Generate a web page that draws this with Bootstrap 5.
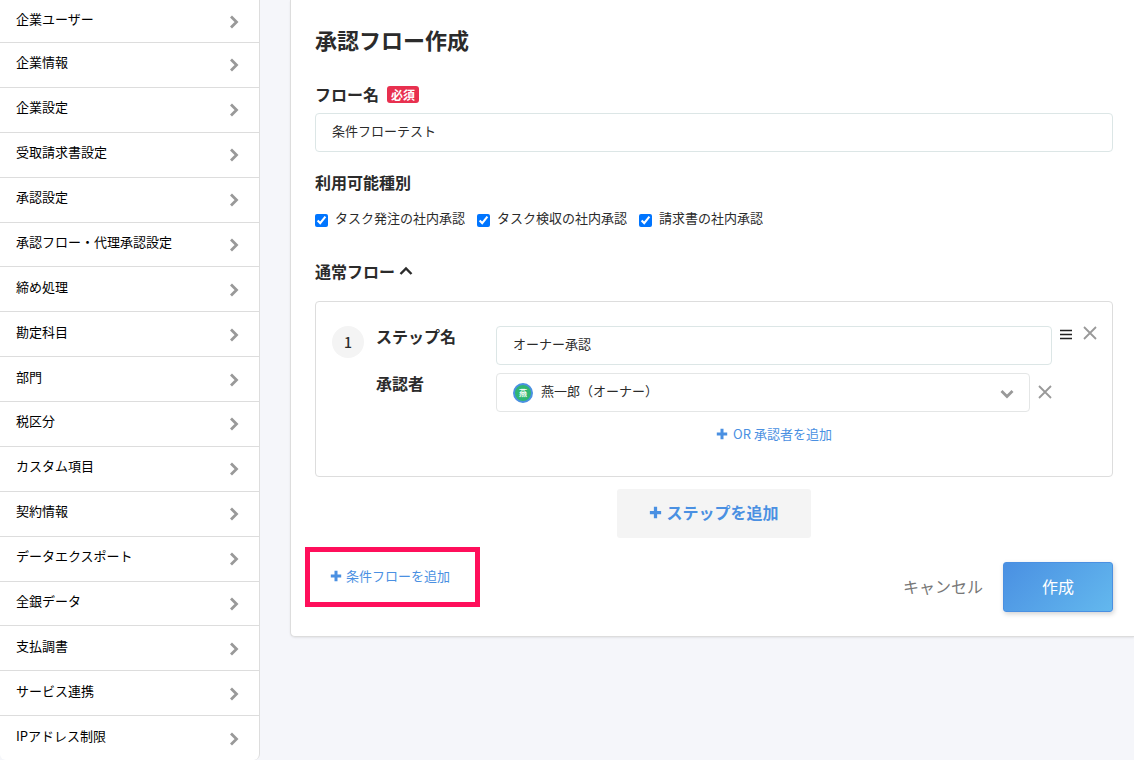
<!DOCTYPE html>
<html lang="ja">
<head>
<meta charset="utf-8">
<meta name="viewport" content="width=device-width, initial-scale=1">
<title>承認フロー作成</title>
<link href="https://cdn.jsdelivr.net/npm/bootstrap@5.3.0/dist/css/bootstrap.min.css" rel="stylesheet">
<style>
  body { background: #f5f6fa; color: #2b2b2b; font: 13px/20px "Noto Sans CJK JP", sans-serif; }
  a { text-decoration: none; color: #4a90e2; }
  svg { display: block; flex: none; }
  .side-menu { width: 260px; min-height: 100vh; border: solid #ddd; border-width: 0 1px 0 0; border-radius: 0 0 6px 6px; background: #fff; }
  .side-menu li { flex: 1 1 0; display: flex; border-bottom: 1px solid #ddd; }
  .side-menu li:first-child { flex: 0 0 43px; }
  .side-menu li:last-child { border-bottom: 0; }
  .side-menu a { color: #000; padding: 1px 20px 0 16px; }
  .side-menu span { padding-bottom: 6px; }
  .side-menu svg { stroke: #999; }
  .panel { margin-left: 30px; padding: 24px 21px 24px 24px; background: #fff; border: solid #ddd; border-width: 0 0 1px 1px; border-radius: 0 0 0 5px; box-shadow: 0 1px 2px rgba(0,0,0,.08); }
  h1 { font-size: 22px; line-height: 30px; font-weight: 700; margin: 0 0 28px; }
  .field-title { font-size: 16px; line-height: 24px; font-weight: 700; margin: 0; }
  .required { background: #e8304f; font-size: 12px; line-height: 17px; padding: 0 4px; border-radius: 3px; }
  .name-row { margin-bottom: 7px; }
  .form-control, .form-select { height: 39px; padding: 0 16px 4px; font-size: 13px; line-height: 20px; color: #2b2b2b; border-color: #dce6e6; border-radius: 4px; }
  .form-select { padding-left: 44px; background-image: none; border-color: #e4e6e6; }
  .kind-title { margin-top: 18px; }
  .kinds { column-gap: 12px; margin: 14px 0 31px; }
  .kinds div { display: flex; column-gap: 7px; }
  .kinds input { width: 13px; height: 13px; margin: 6px 0 0; accent-color: #0075ff; }
  .step-box { border: 1px solid #ddd; border-radius: 4px; padding: 24px 15px 24px 16px; margin-top: 18px; }
  .step-no { width: 32px; height: 32px; border-radius: 50%; background: #f4f4f4; font-size: 14px; font-weight: 500; }
  .step-label { width: 120px; line-height: 20px; }
  .plain-btn { border: 0; background: none; padding: 0; color: #999; }
  .step-tools { gap: 11px; }
  .avatar-mark { position: absolute; left: 17px; top: 10px; width: 20px; height: 20px; border: 2px solid #4a90e2; border-radius: 50%; background: #2fb673; color: #fff; font-size: 8px; line-height: 15px; text-align: center; font-weight: 700; pointer-events: none; }
  .select-arrow { position: absolute; right: 16px; top: 16px; pointer-events: none; }
  .add-link { column-gap: 5px; }
  .add-step { width: 194px; height: 49px; padding-bottom: 4px; background: #f4f4f4; color: #4a90e2; border: 0; border-radius: 3px; font-size: 16px; font-weight: 700; margin-top: 12px; }
  .condition { margin: 4px 0 0 15px; }
  .marker { position: absolute; left: -25px; top: -19px; width: 175px; height: 60px; border: 5px solid #ff0f5b; pointer-events: none; }
  .cancel { font-size: 16px; line-height: 24px; color: #777; margin-right: 20px; padding-bottom: 2px; }
  .create { width: 110px; height: 50px; padding-bottom: 3px; font-size: 16px; color: #fff; border: 1px solid #4a90e2; border-radius: 3px; background: linear-gradient(135deg, #4a90e2, #63b8ee); box-shadow: 1px 2px 5px rgba(0,0,0,.18); }
</style>
<script src="https://cdn.jsdelivr.net/npm/bootstrap@5.3.0/dist/js/bootstrap.bundle.min.js"></script>
</head>
<body>
<svg width="0" height="0" class="position-absolute" aria-hidden="true">
  <symbol id="chev" viewBox="0 0 10 14"><path d="M2 1.5 7.5 7 2 12.5" fill="none" stroke-width="2.8"/></symbol>
  <symbol id="plus" viewBox="0 0 12 12"><path d="M6 .8v10.4M.8 6h10.4" stroke="currentColor" stroke-width="3" fill="none"/></symbol>
  <symbol id="cross" viewBox="0 0 14 14"><path d="M1 1l12 12M13 1 1 13" stroke="currentColor" stroke-width="1.8" fill="none"/></symbol>
</svg>
<div class="d-flex align-items-start">
  <nav class="flex-shrink-0 d-flex" aria-label="設定">
    <ul class="side-menu list-unstyled d-flex flex-column m-0">
      <li><a href="#" class="d-flex flex-fill align-items-center justify-content-between"><span>企業ユーザー</span><svg width="10" height="14"><use href="#chev"/></svg></a></li>
      <li><a href="#" class="d-flex flex-fill align-items-center justify-content-between"><span>企業情報</span><svg width="10" height="14"><use href="#chev"/></svg></a></li>
      <li><a href="#" class="d-flex flex-fill align-items-center justify-content-between"><span>企業設定</span><svg width="10" height="14"><use href="#chev"/></svg></a></li>
      <li><a href="#" class="d-flex flex-fill align-items-center justify-content-between"><span>受取請求書設定</span><svg width="10" height="14"><use href="#chev"/></svg></a></li>
      <li><a href="#" class="d-flex flex-fill align-items-center justify-content-between"><span>承認設定</span><svg width="10" height="14"><use href="#chev"/></svg></a></li>
      <li><a href="#" class="d-flex flex-fill align-items-center justify-content-between"><span>承認フロー・代理承認設定</span><svg width="10" height="14"><use href="#chev"/></svg></a></li>
      <li><a href="#" class="d-flex flex-fill align-items-center justify-content-between"><span>締め処理</span><svg width="10" height="14"><use href="#chev"/></svg></a></li>
      <li><a href="#" class="d-flex flex-fill align-items-center justify-content-between"><span>勘定科目</span><svg width="10" height="14"><use href="#chev"/></svg></a></li>
      <li><a href="#" class="d-flex flex-fill align-items-center justify-content-between"><span>部門</span><svg width="10" height="14"><use href="#chev"/></svg></a></li>
      <li><a href="#" class="d-flex flex-fill align-items-center justify-content-between"><span>税区分</span><svg width="10" height="14"><use href="#chev"/></svg></a></li>
      <li><a href="#" class="d-flex flex-fill align-items-center justify-content-between"><span>カスタム項目</span><svg width="10" height="14"><use href="#chev"/></svg></a></li>
      <li><a href="#" class="d-flex flex-fill align-items-center justify-content-between"><span>契約情報</span><svg width="10" height="14"><use href="#chev"/></svg></a></li>
      <li><a href="#" class="d-flex flex-fill align-items-center justify-content-between"><span>データエクスポート</span><svg width="10" height="14"><use href="#chev"/></svg></a></li>
      <li><a href="#" class="d-flex flex-fill align-items-center justify-content-between"><span>全銀データ</span><svg width="10" height="14"><use href="#chev"/></svg></a></li>
      <li><a href="#" class="d-flex flex-fill align-items-center justify-content-between"><span>支払調書</span><svg width="10" height="14"><use href="#chev"/></svg></a></li>
      <li><a href="#" class="d-flex flex-fill align-items-center justify-content-between"><span>サービス連携</span><svg width="10" height="14"><use href="#chev"/></svg></a></li>
      <li><a href="#" class="d-flex flex-fill align-items-center justify-content-between"><span>IPアドレス制限</span><svg width="10" height="14"><use href="#chev"/></svg></a></li>
    </ul>
  </nav>
  <main class="panel flex-grow-1">
    <h1>承認フロー作成</h1>
    <div class="name-row d-flex align-items-center gap-2">
      <label class="field-title" for="flow">フロー名</label><span class="badge required">必須</span>
    </div>
    <input class="form-control" id="flow" type="text" value="条件フローテスト">
    <h2 class="field-title kind-title">利用可能種別</h2>
    <div class="kinds d-flex flex-wrap">
      <div><input type="checkbox" id="k1" checked><label for="k1">タスク発注の社内承認</label></div>
      <div><input type="checkbox" id="k2" checked><label for="k2">タスク検収の社内承認</label></div>
      <div><input type="checkbox" id="k3" checked><label for="k3">請求書の社内承認</label></div>
    </div>
    <h2 class="field-title d-flex align-items-center gap-1">通常フロー<svg width="14" height="10" viewBox="0 0 14 10"><path d="M1.5 8 7 2.5 12.5 8" fill="none" stroke="#2b2b2b" stroke-width="2.4"/></svg></h2>
    <section class="step-box d-flex align-items-start">
      <div class="step-no d-flex align-items-center justify-content-center flex-shrink-0 me-2">1</div>
      <div class="flex-grow-1 ms-1">
        <div class="d-flex mb-2">
          <label class="step-label field-title flex-shrink-0" for="step">ステップ名</label>
          <input class="form-control" id="step" type="text" value="オーナー承認">
        </div>
        <div class="d-flex">
          <label class="step-label field-title flex-shrink-0" for="who">承認者</label>
          <div class="flex-grow-1">
            <div class="d-flex align-items-start gap-2">
              <div class="position-relative flex-grow-1">
                <select class="form-select" id="who"><option>燕一郎（オーナー）</option></select>
                <span class="avatar-mark">燕</span>
                <svg class="select-arrow" width="14" height="10" viewBox="0 0 14 10"><path d="M1.5 2 7 7.5 12.5 2" fill="none" stroke="#999" stroke-width="2.8"/></svg>
              </div>
              <button type="button" class="plain-btn mt-2 pt-1" aria-label="承認者を削除"><svg width="14" height="14"><use href="#cross"/></svg></button>
            </div>
            <div class="d-flex justify-content-center pt-2 mt-1 pb-2"><a href="#" class="add-link d-inline-flex align-items-center"><svg width="12" height="12"><use href="#plus"/></svg>OR 承認者を追加</a></div>
          </div>
        </div>
      </div>
      <div class="step-tools d-flex align-items-start ms-2">
        <button type="button" class="plain-btn" aria-label="並べ替え"><svg width="12" height="17" viewBox="0 0 12 17"><path d="M0 4.5h12M0 8.5h12M0 12.5h12" stroke="#222" stroke-width="1.6"/></svg></button>
        <button type="button" class="plain-btn" aria-label="ステップを削除"><svg width="14" height="14"><use href="#cross"/></svg></button>
      </div>
    </section>
    <div class="text-center"><button type="button" class="add-step"><span class="d-inline-flex align-items-center gap-1"><svg width="13" height="13"><use href="#plus"/></svg>ステップを追加</span></button></div>
    <div class="d-flex align-items-start justify-content-between mt-4">
      <div class="condition position-relative"><a href="#" class="d-inline-flex align-items-center gap-1"><svg width="12" height="12"><use href="#plus"/></svg>条件フローを追加</a><span class="marker"></span></div>
      <div class="d-flex align-items-center"><a href="#" class="cancel">キャンセル</a><button type="submit" class="create">作成</button></div>
    </div>
  </main>
</div>
</body>
</html>
